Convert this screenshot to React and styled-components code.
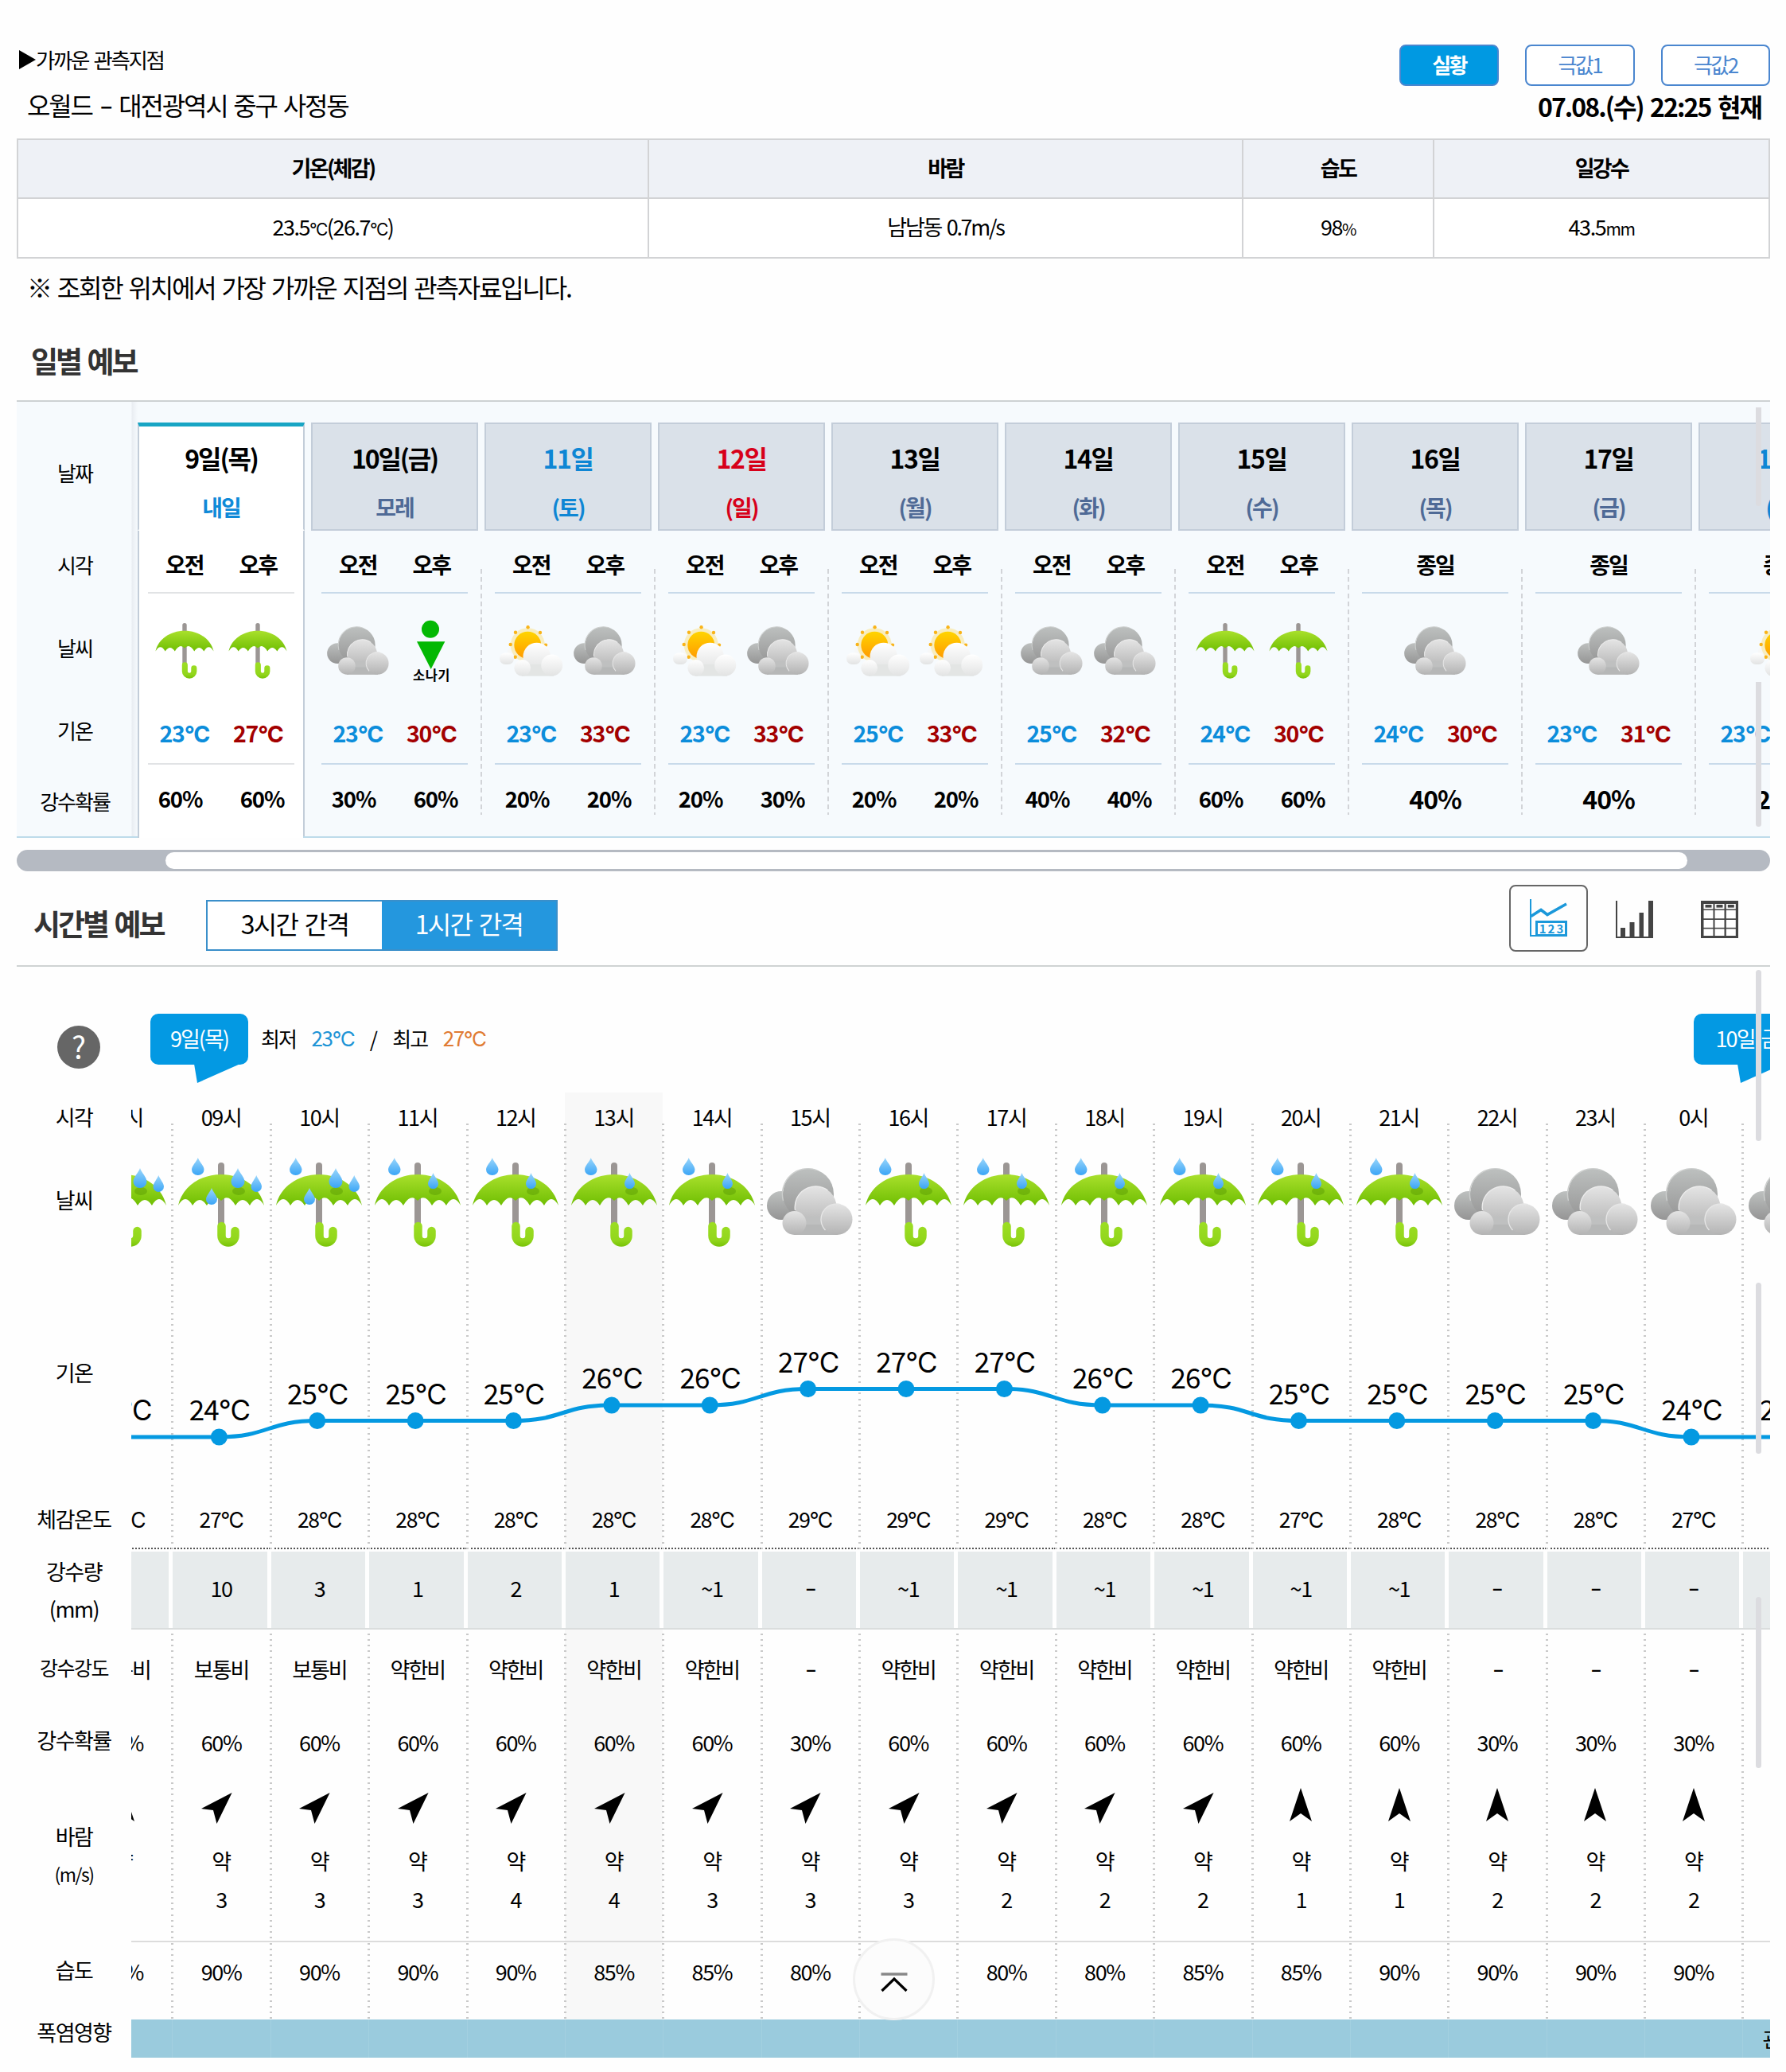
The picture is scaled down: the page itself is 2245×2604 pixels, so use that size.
import React from "react";
import styled, { createGlobalStyle, css } from "styled-components";

const GlobalStyle = createGlobalStyle`
  * {
    box-sizing: border-box;
  }

  body {
    margin: 0;
    background: #fefefe;
    color: #000000;
    font-family: "Noto Sans CJK KR", sans-serif;
  }
`;

const COLUMN = 123.375;
const CHART_TOP = 1590;

const DAYS = [
  { date: "9일(목)", sub: "내일", selected: true, icons: ["umbrella", "umbrella"], low: 23, high: 27, rain: [60, 60] },
  { date: "10일(금)", sub: "모레", icons: ["cloud", "shower"], low: 23, high: 30, rain: [30, 60] },
  { date: "11일", sub: "(토)", tone: "#0e86d4", icons: ["sun", "cloud"], low: 23, high: 33, rain: [20, 20] },
  { date: "12일", sub: "(일)", tone: "#d7001a", icons: ["sun", "cloud"], low: 23, high: 33, rain: [20, 30] },
  { date: "13일", sub: "(월)", icons: ["sun", "sun"], low: 25, high: 33, rain: [20, 20] },
  { date: "14일", sub: "(화)", icons: ["cloud", "cloud"], low: 25, high: 32, rain: [40, 40] },
  { date: "15일", sub: "(수)", icons: ["umbrella", "umbrella"], low: 24, high: 30, rain: [60, 60] },
  { date: "16일", sub: "(목)", icons: ["cloud"], low: 24, high: 30, rain: [40] },
  { date: "17일", sub: "(금)", icons: ["cloud"], low: 23, high: 31, rain: [40] },
  { date: "18일", sub: "(토)", tone: "#0e86d4", icons: ["sun"], low: 23, high: 31, rain: [20] },
];

// hour, icon, temperature, feels like, amount, intensity, chance, wind, speed, humidity
const HOURS = [
  ["08시", "heavy", 24, 27, "5", "보통비", 60, "n", 2, 90],
  ["09시", "heavy", 24, 27, "10", "보통비", 60, "ne", 3, 90],
  ["10시", "heavy", 25, 28, "3", "보통비", 60, "ne", 3, 90],
  ["11시", "light", 25, 28, "1", "약한비", 60, "ne", 3, 90],
  ["12시", "light", 25, 28, "2", "약한비", 60, "ne", 4, 90],
  ["13시", "light", 26, 28, "1", "약한비", 60, "ne", 4, 85],
  ["14시", "light", 26, 28, "~1", "약한비", 60, "ne", 3, 85],
  ["15시", "cloud", 27, 29, "-", "-", 30, "ne", 3, 80],
  ["16시", "light", 27, 29, "~1", "약한비", 60, "ne", 3, 80],
  ["17시", "light", 27, 29, "~1", "약한비", 60, "ne", 2, 80],
  ["18시", "light", 26, 28, "~1", "약한비", 60, "ne", 2, 80],
  ["19시", "light", 26, 28, "~1", "약한비", 60, "ne", 2, 85],
  ["20시", "light", 25, 27, "~1", "약한비", 60, "n", 1, 85],
  ["21시", "light", 25, 28, "~1", "약한비", 60, "n", 1, 90],
  ["22시", "cloud", 25, 28, "-", "-", 30, "n", 2, 90],
  ["23시", "cloud", 25, 28, "-", "-", 30, "n", 2, 90],
  ["0시", "cloud", 24, 27, "-", "-", 30, "n", 2, 90],
  ["01시", "cloud", 24, 27, "-", "-", 30, "n", 2, 90],
];

const TEMP_Y = { 24: 1806, 25: 1785.5, 26: 1766, 27: 1745.5 };

const Page = styled.div`
  position: relative;
  width: 2245px;
  height: 2604px;
  padding: 56px 20px 0 21px;
  overflow: hidden;
`;

const Text = styled.span`
  font-size: ${(p) => p.$size || 27}px;
  font-weight: ${(p) => (p.$bold ? 700 : 400)};
  letter-spacing: ${(p) => p.$track ?? -1.4}px;
  word-spacing: 3px;
  color: ${(p) => p.$color || "inherit"};
  line-height: 1;
  white-space: nowrap;
`;

const Latin = styled.span`
  font-family: Inter, "Noto Sans CJK KR", sans-serif;
`;

const Dash = styled(Latin)`
  display: inline-block;
  transform: scaleX(1.25);
  margin: 0 ${(p) => p.$gap || 0}px;
`;

/* observation */

const TopBar = styled.div`
  display: flex;
  justify-content: space-between;
  height: 52px;
  padding-left: 3px;
`;

const Near = styled.div`
  display: flex;
  align-items: center;
  height: 38px;
`;

const Triangle = styled.i`
  border-left: 21px solid #000;
  border-top: 12px solid transparent;
  border-bottom: 12px solid transparent;
`;

const Tabs = styled.div`
  display: flex;
  gap: 33px;
`;

const Tab = styled.button`
  width: ${(p) => (p.$active ? 125 : 137.5)}px;
  height: 52px;
  padding: 0 0 3px;
  border: 2px solid #4a86cf;
  border-radius: 8px;
  background: ${(p) => (p.$active ? "#0099e2" : "#fff")};
  color: ${(p) => (p.$active ? "#fff" : "#4a86cf")};
  font: ${(p) => (p.$active ? 700 : 400)} 26px "Noto Sans CJK KR", sans-serif;
  letter-spacing: -2.6px;
`;

const PlaceBar = styled.div`
  display: flex;
  align-items: center;
  justify-content: space-between;
  height: 48px;
  padding: 1px 11px 0 13px;
`;

const ObsTable = styled.div`
  display: grid;
  grid-template-columns: 793px 747px 240px 1fr;
  margin-top: 18px;
  border: 2px solid #d2d3d5;
  border-bottom: 0;
`;

const ObsCell = styled.div`
  display: flex;
  align-items: center;
  justify-content: center;
  height: ${(p) => (p.$head ? 74 : 75)}px;
  padding-bottom: ${(p) => (p.$head ? 3 : 4)}px;
  background: ${(p) => (p.$head ? "#eef1f6" : "#fff")};
  border-bottom: 2px solid #d2d3d5;
  border-right: ${(p) => (p.$last ? 0 : "2px solid #d2d3d5")};
`;

const Note = styled.div`
  display: flex;
  align-items: center;
  height: 70px;
  padding-left: 13px;
`;

const Heading = styled.div`
  display: flex;
  align-items: center;
  height: 108px;
  padding: 8px 0 0 18px;
`;

/* daily forecast */

const Daily = styled.section`
  position: relative;
  display: flex;
  height: 550px;
  border-top: 2px solid #cdd1d3;
  background: #f6fafd;
  overflow: hidden;
`;

const DailyLabels = styled.div`
  flex: none;
  width: 152px;
  padding: 28px 6px 0 0;
  border-bottom: 2px solid #bddbea;
  background: linear-gradient(90deg, transparent 144px, #e9edf2 145px, #f6fafd 152px);
`;

const LabelCell = styled.div`
  display: flex;
  align-items: center;
  justify-content: center;
  height: ${(p) => p.$h}px;
  margin-top: ${(p) => p.$gap || 0}px;
`;

const Day = styled.div`
  position: relative;
  flex: none;
  display: flex;
  flex-direction: column;
  width: 218px;
  padding: 26px 8px 0 0;
  border-bottom: 2px solid #bddbea;

  ${(p) =>
    p.$divider &&
    css`
      &::after {
        content: "";
        position: absolute;
        right: 3px;
        top: 210px;
        height: 309px;
        width: 2px;
        background: repeating-linear-gradient(#d2d4d8 0 6px, transparent 6px 10.2px);
      }
    `}

  ${(p) =>
    p.$selected &&
    css`
      width: 210px;
      margin-right: 8px;
      padding-right: 0;
      border-bottom: 0;
    `}
`;

const DayHead = styled.div`
  display: flex;
  flex-direction: column;
  align-items: center;
  height: 136px;
  padding-top: ${(p) => (p.$selected ? 21 : 24)}px;
  border: 2px solid #c3cdd9;
  background: #dae1e9;

  ${(p) =>
    p.$selected &&
    css`
      border-top: 5px solid #18a5c4;
      border-bottom-color: #fff;
      background: #fff;
    `}
`;

const DayBody = styled.div`
  flex: 1;
  padding: 0 11px;
  background: ${(p) => (p.$selected ? "#fff" : "transparent")};
  border: solid ${(p) => (p.$selected ? "#c3cdd9" : "transparent")};
  border-width: 0 2px;
`;

const DayRow = styled.div`
  display: flex;
  align-items: center;
  justify-content: center;
  height: ${(p) => p.$h}px;
  padding-top: ${(p) => p.$top || 0}px;
  padding-bottom: ${(p) => p.$pad || 0}px;
  border-bottom: ${(p) => (p.$line ? `2px solid ${p.$selected ? "#e1e3e5" : "#c8daea"}` : 0)};
`;

const Half = styled.div`
  display: flex;
  flex: none;
  justify-content: center;
  width: ${(p) => p.$w || 92.5}px;
`;

const BottomLine = styled.div`
  position: absolute;
  right: 0;
  bottom: 0;
  left: 360px;
  height: 2px;
  background: #bddbea;
`;

const SlideTrack = styled.div`
  height: 27px;
  margin-top: 15px;
  padding: 3px 104px 3px 187px;
  border-radius: 14px;
  background: #b5bac2;
`;

const SlideThumb = styled.div`
  height: 21px;
  border-radius: 11px;
  background: #fff;
`;

/* hourly forecast */

const HourlyBar = styled.div`
  display: flex;
  align-items: center;
  height: 120px;
  padding: 0 10px 0 21px;
  border-bottom: 2px solid #cfd3d3;
`;

const Title = styled.div`
  display: flex;
  align-items: center;
  width: 217px;
  height: 60px;
  margin-top: 12px;
`;

const Toggle = styled.div`
  display: flex;
  width: 442px;
  height: 64px;
  margin-top: 17px;
  border: 2px solid #3a8fca;
`;

const ToggleItem = styled.div`
  display: flex;
  align-items: center;
  justify-content: center;
  flex: 1;
  padding-bottom: 5px;
  background: ${(p) => (p.$active ? "#2497de" : "#fff")};
  color: ${(p) => (p.$active ? "#fff" : "#000")};
`;

const Views = styled.div`
  display: flex;
  align-items: center;
  margin: 0 0 0 auto;
`;

const View = styled.div`
  display: flex;
  align-items: center;
  justify-content: center;
  width: ${(p) => (p.$active ? 99 : 107)}px;
  height: 84px;
  margin-right: ${(p) => (p.$active ? 5 : 0)}px;
  padding-bottom: ${(p) => (p.$active ? 2 : 0)}px;
  padding-top: ${(p) => (p.$active ? 0 : 2)}px;
  border: ${(p) => (p.$active ? "2px solid #666" : 0)};
  border-radius: 8px;
`;

const Hourly = styled.section`
  display: flex;
  height: 1391px;
`;

const HourlyLabels = styled.div`
  flex: none;
  width: 144px;
`;

const Question = styled.div`
  display: flex;
  align-items: center;
  justify-content: center;
  width: 54px;
  height: 54px;
  margin: 74px 0 30px 51px;
  border-radius: 50%;
  background: #666;
  padding-bottom: 3px;
`;

const Viewport = styled.div`
  position: relative;
  flex: 1;
  min-width: 0;
  overflow: hidden;
`;

const Strip = styled.div`
  display: flex;
  height: 158px;
  width: 2400px;
  padding: 59px 0 0 24px;
`;

const DayGroup = styled.div`
  display: flex;
  align-items: flex-start;
  width: 1940px;
`;

const Bubble = styled.div`
  position: relative;
  display: flex;
  align-items: center;
  justify-content: center;
  width: ${(p) => p.$w}px;
  height: 64px;
  padding-bottom: 3px;
  border-radius: 10px;
  background: #0399e3;
  color: #fff;

  svg {
    position: absolute;
    left: 55px;
    top: 63px;
  }
`;

const MinMax = styled.div`
  display: flex;
  align-items: center;
  height: 61px;
  padding-left: 16px;
  gap: 19.5px;
`;

const Columns = styled.div`
  display: flex;
  margin-left: -72px;
`;

const Column = styled.div`
  position: relative;
  flex: none;
  width: ${COLUMN}px;
  background: ${(p) => (p.$now ? "#f8f8f8" : "transparent")};

  &::before {
    content: "";
    position: absolute;
    left: -1px;
    top: 39px;
    bottom: 48px;
    width: 3px;
    background: repeating-linear-gradient(#c9c9c9 0 2px, transparent 2px 7.2px);
  }
`;

const Cell = styled.div`
  display: flex;
  align-items: ${(p) => (p.$top ? "flex-start" : "center")};
  justify-content: center;
  height: ${(p) => p.$h}px;
  padding-top: ${(p) => p.$top || 0}px;
  padding-bottom: ${(p) => p.$pad || 0}px;
  border-bottom: ${(p) => p.$line || 0};
`;

const Amount = styled.div`
  position: relative;
  z-index: 1;
  margin-left: -1px;
  padding: 3px 4px 0 2px;
  background: #fefefe;
  border-bottom: 2px solid #dadddd;
`;

const AmountFill = styled.div`
  display: flex;
  align-items: center;
  justify-content: center;
  height: 96px;
  padding: 0 0 6px 3px;
  background: #e7ebec;
`;

const Heat = styled.div`
  position: relative;
  display: flex;
  align-items: center;
  height: 48px;
  padding-left: 25px;
  background: #9acbdd;
  box-shadow: inset 1px 0 0 #a3d0e0;
`;

const ChartLayer = styled.svg`
  position: absolute;
  left: 0;
  top: ${CHART_TOP - 1215}px;
`;

const Bar = styled.i`
  position: absolute;
  z-index: 2;
  left: 2207px;
  top: ${(p) => p.$top}px;
  width: 7px;
  height: ${(p) => p.$h}px;
  border-radius: ${(p) => (p.$flat ? "0 0 4px 4px" : "4px")};
  background: #dcdce0;
`;

const ToTop = styled.div`
  position: absolute;
  z-index: 2;
  left: 1072px;
  top: 2436px;
  display: flex;
  align-items: center;
  justify-content: center;
  width: 103px;
  height: 103px;
  padding-top: 4px;
  border: 3px solid #f1f1f1;
  border-radius: 50%;
  background: #fcfcfc;
`;

const Defs = () => (
  <svg width="0" height="0" style={{ position: "absolute" }}>
    <defs>
      <linearGradient id="canopy" x1="0" y1="0" x2="0" y2="1">
        <stop offset="0" stopColor="#a9e02c" />
        <stop offset="1" stopColor="#6fbe02" />
      </linearGradient>
      <linearGradient id="handle" gradientUnits="userSpaceOnUse" x1="0" y1="84" x2="0" y2="112">
        <stop offset="0" stopColor="#9bdd22" />
        <stop offset=".7" stopColor="#92d61c" />
        <stop offset="1" stopColor="#76c206" />
      </linearGradient>
      <linearGradient id="backCloud" x1="0" y1="0" x2="0" y2="1">
        <stop offset="0" stopColor="#bdc0bf" />
        <stop offset="1" stopColor="#959595" />
      </linearGradient>
      <linearGradient id="frontCloud" x1="0" y1="0" x2="0" y2="1">
        <stop offset="0" stopColor="#e4e4e4" />
        <stop offset="1" stopColor="#b3b3b3" />
      </linearGradient>
      <linearGradient id="whiteCloud" x1="0" y1="0" x2="0" y2="1">
        <stop offset="0" stopColor="#ffffff" />
        <stop offset="1" stopColor="#e2e3e3" />
      </linearGradient>
      <linearGradient id="sun" x1="0" y1="0" x2="0" y2="1">
        <stop offset="0" stopColor="#ffd400" />
        <stop offset="1" stopColor="#ff9a00" />
      </linearGradient>
      <linearGradient id="drop" x1="0" y1="0" x2="0" y2="1">
        <stop offset="0" stopColor="#9bd6fb" />
        <stop offset="1" stopColor="#3aa5f6" />
      </linearGradient>
    </defs>
  </svg>
);

const Umbrella = () => (
  <g>
    <rect x="50" y="6" width="8" height="80" rx="4" fill="#9b9694" />
    <path
      d="M0 60C5 37 27 21 54 21S103 37 108 60Q99 44 90 60Q81 46 72 60Q63 44 54 54Q45 44 36 60Q27 46 18 60Q9 44 0 60Z"
      fill="url(#canopy)"
    />
    <path
      d="M54.5 86V98A8.5 8.5 0 0 0 71.5 98V92"
      fill="none"
      stroke="url(#handle)"
      strokeWidth="10.5"
      strokeLinecap="round"
    />
  </g>
);

const Drop = ({ x, y, w, h }) => (
  <path
    d="M7 0C8.5 5 14 10 14 15A7 7 0 0 1 0 15C0 10 5.5 5 7 0Z"
    transform={`translate(${x} ${y}) scale(${w / 14} ${h / 22})`}
    fill="url(#drop)"
  />
);

const Cloud = () => (
  <g>
    <circle cx="17.5" cy="46" r="18" fill="url(#backCloud)" />
    <circle cx="51.5" cy="31.5" r="32" fill="url(#backCloud)" />
    <path d="M20 40A32 32 0 0 1 62 1.6" fill="none" stroke="#cdcfce" strokeWidth="1.4" />
    <circle cx="61" cy="48" r="26" fill="url(#frontCloud)" />
    <path d="M35 52A26 26 0 0 1 76 27" fill="none" stroke="#ececec" strokeWidth="1.4" />
    <path d="M34 60H88V83H34Z" fill="#bfc0c0" />
    <path d="M34 70H88V83H34Z" fill="#b6b7b7" />
    <circle cx="87.5" cy="63.5" r="19.5" fill="url(#frontCloud)" />
    <path d="M73 77A19.5 19.5 0 0 1 92 44.6" fill="none" stroke="#e6e6e6" strokeWidth="1.4" />
    <circle cx="34" cy="68" r="15" fill="url(#frontCloud)" />
  </g>
);

const SunCloud = () => (
  <g>
    <circle cx="20" cy="44" r="8" fill="#f7f8f8" />
    <circle cx="37.3" cy="35.7" r="21.5" fill="#f8edbf" />
    {[
      [37.6, 13.3],
      [53, 20],
      [60, 35.6],
      [15.7, 35],
      [22, 19.7],
      [21.7, 50.7],
    ].map(([x, y]) => (
      <circle key={x} cx={x} cy={y} r="2.2" fill="#f9b419" />
    ))}
    <circle cx="37.3" cy="35.7" r="17" fill="url(#sun)" />
    <rect x="2" y="45.5" width="18" height="14.5" rx="7.2" fill="url(#whiteCloud)" />
    <circle cx="48.7" cy="50" r="17.2" fill="url(#whiteCloud)" />
    <rect x="30" y="60" width="40" height="14.7" fill="#e3e5e4" />
    <circle cx="67.7" cy="61" r="13.5" fill="url(#whiteCloud)" />
    <circle cx="30.7" cy="64.3" r="10.4" fill="url(#whiteCloud)" />
  </g>
);

const Shower = () => (
  <g>
    <circle cx="41" cy="15.7" r="11" fill="#03b803" />
    <path d="M24 31.3H59.3L41.7 66Z" fill="#03b803" />
    <text x="42.5" y="80" fontSize="16.5" fontWeight="700" letterSpacing=".5" textAnchor="middle">
      소나기
    </text>
  </g>
);

function DayIcon({ type }) {
  return (
    <svg width="84" height="84" viewBox="0 0 84 84">
      {type === "umbrella" && (
        <g transform="translate(5.5 4) scale(.676 .66)">
          <Umbrella />
        </g>
      )}
      {type === "cloud" && (
        <g transform="translate(3.5 13) scale(.72)">
          <Cloud />
        </g>
      )}
      {type === "sun" && <SunCloud />}
      {type === "shower" && <Shower />}
    </svg>
  );
}

function HourIcon({ type }) {
  return (
    <svg width="108" height="114" viewBox="0 0 108 114">
      {type === "cloud" ? (
        <g transform="translate(.5 14)">
          <Cloud />
        </g>
      ) : (
        <g>
          <Umbrella />
          <Drop x={17} y={0} w={15.5} h={22} />
          {type === "heavy" ? (
            <>
              <ellipse cx="76" cy="42" rx="8" ry="5" fill="#4f9000" opacity=".4" />
              <Drop x={66.5} y={13} w={17} h={25} />
              <Drop x={91.5} y={22} w={13.5} h={21} />
              <Drop x={35} y={38} w={14} h={21} />
            </>
          ) : (
            <>
              <ellipse cx="76" cy="42" rx="8" ry="5" fill="#4f9000" opacity=".4" />
              <Drop x={67} y={19} w={13} h={20} />
            </>
          )}
        </g>
      )}
    </svg>
  );
}

function Arrow({ dir }) {
  return (
    <svg width="56" height="48" viewBox="0 0 56 48">
      <path d={dir === "n" ? "M28 2L42 44L28 34L14 44Z" : "M41.6 8L3 28L18 30L22.5 47Z"} fill="#000" />
    </svg>
  );
}

function TempChart() {
  const points = HOURS.map((h, i) => [i * COLUMN - 13, TEMP_Y[h[2]] - CHART_TOP, h[2]]);
  const d = points.reduce((path, [x, y], i) => {
    if (!i) return `M${x} ${y}`;
    const [px, py] = points[i - 1];
    const mid = (px + x) / 2;
    return `${path}C${mid} ${py} ${mid} ${y} ${x} ${y}`;
  }, "");

  return (
    <ChartLayer width="2060" height="290">
      <path d={d} fill="none" stroke="#0499e1" strokeWidth="5" />
      {points.map(([x, y, t]) => (
        <g key={x}>
          <circle cx={x} cy={y} r="10.5" fill="#0499e1" />
          <text x={x + 0.5} y={y - 21} fontSize="35" letterSpacing="-.9" textAnchor="middle">
            {t}
            <tspan fontFamily="Inter">°C</tspan>
          </text>
        </g>
      ))}
    </ChartLayer>
  );
}

function Observation() {
  return (
    <>
      <TopBar>
        <Near>
          <Triangle />
          <Text $size={26.5} $track={-2.4}>가까운 관측지점</Text>
        </Near>
        <Tabs>
          <Tab $active>실황</Tab>
          <Tab>극값1</Tab>
          <Tab>극값2</Tab>
        </Tabs>
      </TopBar>
      <PlaceBar>
        <Text $size={32} $track={-2.2}>오월드 <Dash $gap={2.5}>-</Dash> 대전광역시 중구 사정동</Text>
        <Text $size={32} $bold $track={-1.9}>07.08.(수) 22:25 현재</Text>
      </PlaceBar>
      <ObsTable>
        <ObsCell $head><Text $bold $track={-2.6}>기온(체감)</Text></ObsCell>
        <ObsCell $head><Text $bold $track={-2.6}>바람</Text></ObsCell>
        <ObsCell $head><Text $bold $track={-2.6}>습도</Text></ObsCell>
        <ObsCell $head $last><Text $bold $track={-2.6}>일강수</Text></ObsCell>
        <ObsCell>
          <Text $track={-1.5}>
            23.5<Text $size={21} $track={-1.4}><Latin>°C</Latin></Text>(26.7<Text $size={21} $track={-1.4}><Latin>°C</Latin></Text>)
          </Text>
        </ObsCell>
        <ObsCell><Text $track={-2.3}>남남동 0.7m/s</Text></ObsCell>
        <ObsCell><Text $track={-1.4}>98<Text $size={20}>%</Text></Text></ObsCell>
        <ObsCell $last><Text $track={-1.4}>43.5<Text $size={21}>mm</Text></Text></ObsCell>
      </ObsTable>
      <Note>
        <Text $size={32} $track={-2.2}>※ 조회한 위치에서 가장 가까운 지점의 관측자료입니다.</Text>
      </Note>
    </>
  );
}

function DayColumn({ day, index }) {
  const single = day.icons.length === 1;
  const { selected } = day;
  return (
    <Day $selected={selected} $divider={index > 0}>
      <DayHead $selected={selected}>
        <LabelCell $h={36}>
          <Text $size={32} $bold $track={index < 2 ? -2.1 : -1.4} $color={day.tone}>{day.date}</Text>
        </LabelCell>
        <LabelCell $h={34} $gap={27}>
          <Text $size={28} $bold $track={-2} $color={day.tone || (selected ? "#0f8ad8" : "#4f6a96")}>
            {day.sub}
          </Text>
        </LabelCell>
      </DayHead>
      <DayBody $selected={selected}>
        <DayRow $h={79} $top={7} $line $selected={selected}>
          {(single ? ["종일"] : ["오전", "오후"]).map((t) => (
            <Half key={t}><Text $size={28} $bold $track={-2}>{t}</Text></Half>
          ))}
        </DayRow>
        <DayRow $h={144} $pad={2}>
          {day.icons.map((icon, i) => (
            <Half key={i}><DayIcon type={icon} /></Half>
          ))}
        </DayRow>
        <DayRow $h={71} $pad={4} $line $selected={selected}>
          <Half><Text $size={28.5} $bold $track={-1.2} $color="#0c8ddb">{day.low}<Latin>°C</Latin></Text></Half>
          <Half><Text $size={28.5} $bold $track={-1.2} $color="#a30000">{day.high}<Latin>°C</Latin></Text></Half>
        </DayRow>
        <DayRow $h={84} $top={single ? 0 : 1}>
          {day.rain.map((r, i) => (
            <Half key={i} $w={103}><Text $size={single ? 32 : 27.5} $bold $track={-1.1}>{r}%</Text></Half>
          ))}
        </DayRow>
      </DayBody>
    </Day>
  );
}

function DailyForecast() {
  return (
    <>
      <Daily>
        <DailyLabels>
          <LabelCell $h={121}><Text $size={26} $track={-2}>날짜</Text></LabelCell>
          <LabelCell $h={111}><Text $size={26} $track={-2}>시각</Text></LabelCell>
          <LabelCell $h={98}><Text $size={26} $track={-2}>날씨</Text></LabelCell>
          <LabelCell $h={110}><Text $size={26} $track={-2}>기온</Text></LabelCell>
          <LabelCell $h={68}><Text $size={26} $track={-2}>강수확률</Text></LabelCell>
        </DailyLabels>
        {DAYS.map((day, i) => (
          <DayColumn key={day.date} day={day} index={i} />
        ))}
        <BottomLine />
      </Daily>
      <SlideTrack>
        <SlideThumb />
      </SlideTrack>
    </>
  );
}

const ViewIcons = () => (
  <Views>
    <View $active>
      <svg width="47" height="47" viewBox="0 0 47 47">
        <path d="M1 0V46H8" fill="none" stroke="#1b98da" strokeWidth="2" />
        <path d="M1.5 21.5L14 13.5L22 19.5L46 6" fill="none" stroke="#1b98da" strokeWidth="3.6" />
        <rect x="8.5" y="28.5" width="37" height="17" fill="none" stroke="#1b98da" strokeWidth="3" />
        <text x="28" y="42.5" fontSize="15" fontWeight="700" letterSpacing="2" textAnchor="middle" fill="#1b98da">
          123
        </text>
      </svg>
    </View>
    <View>
      <svg width="47" height="47" viewBox="0 0 47 47" fill="#444">
        <path d="M0 0H2V45H47V47H0ZM6 34H12V46H6ZM17.5 27H23.5V46H17.5ZM29.5 15H35V46H29.5ZM41 0H47V46H41Z" />
      </svg>
    </View>
    <View>
      <svg width="47" height="47" viewBox="0 0 47 47">
        <rect width="47" height="47" fill="#444" />
        {[3.5, 17.5, 31.8].map((x) => (
          <g key={x} fill="#fff">
            <rect x={x} y="4" width="12" height="6.5" />
            <rect x={x + 2} y="5" width="8" height="3.6" fill="#444" />
            <rect x={x} y="12" width="12" height="10.3" />
            <rect x={x} y="24" width="12" height="9.8" />
            <rect x={x} y="35.4" width="12" height="8.6" />
          </g>
        ))}
      </svg>
    </View>
  </Views>
);

const Tail = () => (
  <svg width="58" height="24" viewBox="0 0 58 24">
    <path d="M0 0H58L4 24Z" fill="#0399e3" />
  </svg>
);

const Value = ({ children }) => (children === "-" ? <Dash>-</Dash> : children);

function HourColumn({ hour }) {
  const [time, icon, , feels, amount, intensity, chance, wind, speed, humidity] = hour;
  return (
    <Column $now={time === "13시"}>
      <Cell $h={60}><Text>{time}</Text></Cell>
      <Cell $h={157} $top={22}><HourIcon type={icon} /></Cell>
      <Cell $h={290} />
      <Cell $h={67} $pad={6} $line="2px dotted #555">
        <Text $size={26.5} $track={-1.4}>{feels}<Latin>°C</Latin></Text>
      </Cell>
      <Amount>
        <AmountFill><Text><Value>{amount}</Value></Text></AmountFill>
      </Amount>
      <Cell $h={98}><Text $track={-2}><Value>{intensity}</Value></Text></Cell>
      <Cell $h={86}><Text>{chance}%</Text></Cell>
      <Cell $h={74}><Arrow dir={wind} /></Cell>
      <Cell $h={64}><Text>약</Text></Cell>
      <Cell $h={71} $pad={36} $line="2px solid #dcdcdc"><Text>{speed}</Text></Cell>
      <Cell $h={97} $pad={25}><Text>{humidity}%</Text></Cell>
      <Heat>{time === "01시" && <Text $size={26}>관심</Text>}</Heat>
    </Column>
  );
}

const HOUR_LABELS = [
  ["시각", 60],
  ["날씨", 148],
  ["기온", 286],
  ["체감온도", 82],
  ["강수량", 50],
  ["(mm)", 45],
  ["강수강도", 102],
  ["강수확률", 80],
  ["바람", 48, 57],
  ["(m/s)", 48],
  ["습도", 78, 57],
  ["폭염영향", 78],
];

function HourlyForecast() {
  return (
    <>
      <HourlyBar>
        <Title><Text $size={37} $bold $track={-3} $color="#333">시간별 예보</Text></Title>
        <Toggle>
          <ToggleItem><Text $size={32} $track={-1.7}>3시간 간격</Text></ToggleItem>
          <ToggleItem $active><Text $size={32} $track={-1.7}>1시간 간격</Text></ToggleItem>
        </Toggle>
        <ViewIcons />
      </HourlyBar>
      <Hourly>
        <HourlyLabels>
          <Question><Text $size={38} $track={0} $color="#fff">?</Text></Question>
          {HOUR_LABELS.map(([label, h, gap]) => (
            <LabelCell key={label} $h={h} $gap={gap}>
              <Text $size={label === "강수강도" ? 25 : label === "(m/s)" ? 23 : 27} $track={-1.5}>{label}</Text>
            </LabelCell>
          ))}
        </HourlyLabels>
        <Viewport>
          <Strip>
            <DayGroup>
              <Bubble $w={123}>
                <Text $track={-2}>9일(목)</Text>
                <Tail />
              </Bubble>
              <MinMax>
                <Text $size={26} $track={-1.9}>최저</Text>
                <Text $size={26} $color="#1d94d6">23<Latin>°C</Latin></Text>
                <Text $size={26}>/</Text>
                <Text $size={26} $track={-1.9}>최고</Text>
                <Text $size={26} $color="#e07b33">27<Latin>°C</Latin></Text>
              </MinMax>
            </DayGroup>
            <Bubble $w={142}>
              <Text $track={-1.8}>10일(금)</Text>
              <Tail />
            </Bubble>
          </Strip>
          <Columns>
            {HOURS.map((hour) => (
              <HourColumn key={hour[0]} hour={hour} />
            ))}
          </Columns>
          <TempChart />
        </Viewport>
      </Hourly>
    </>
  );
}

const BARS = [
  [512, 124, true],
  [857, 182, true],
  [1219, 215],
  [1612, 215],
  [2007, 215],
];

export default function App() {
  return (
    <Page>
      <GlobalStyle />
      <Defs />
      <Observation />
      <Heading>
        <Text $size={37} $bold $track={-3} $color="#333">일별 예보</Text>
      </Heading>
      <DailyForecast />
      <HourlyForecast />
      {BARS.map(([top, h, flat]) => (
        <Bar key={top} $top={top} $h={h} $flat={flat} />
      ))}
      <ToTop>
        <svg width="40" height="34" viewBox="0 0 40 34" fill="none">
          <path d="M3.5 8H36.5" stroke="#888" strokeWidth="3.5" />
          <path d="M4.5 29L20 14L35.5 29" stroke="#000" strokeWidth="3.2" />
        </svg>
      </ToTop>
    </Page>
  );
}
